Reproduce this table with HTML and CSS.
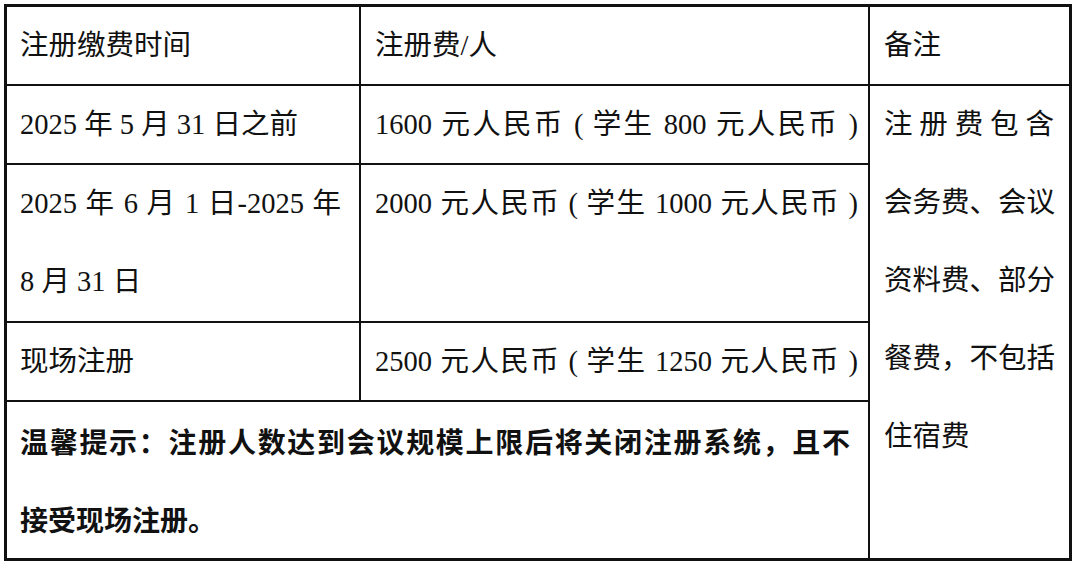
FILE: index.html
```html
<!DOCTYPE html>
<html lang="zh-CN">
<head>
<meta charset="utf-8">
<title>注册缴费</title>
<link rel="stylesheet" href="styles.css">
</head>
<body>
<div class="page">
  <div class="fee-table">
    <div class="cell c1">注册缴费时间</div>
    <div class="cell c2">注册费/人</div>
    <div class="cell c3">备注</div>

    <div class="cell c1">2025 年 5 月 31 日之前</div>
    <div class="cell c2 just">1600 元人民币 ( 学生 800 元人民币 )</div>
    <div class="cell c3 remark">
      <div class="jl">注册费包含</div>
      <div class="jl">会务费、会议</div>
      <div class="jl">资料费、部分</div>
      <div class="jl">餐费，不包括</div>
      <div>住宿费</div>
    </div>

    <div class="cell c1 tall">
      <div class="jl">2025 年 6 月 1 日-2025 年</div>
      <div>8 月 31 日</div>
    </div>
    <div class="cell c2 just tall">2000 元人民币 ( 学生 1000 元人民币 )</div>

    <div class="cell c1">现场注册</div>
    <div class="cell c2 just">2500 元人民币 ( 学生 1250 元人民币 )</div>

    <div class="cell note">
      <div class="jl">温馨提示：注册人数达到会议规模上限后将关闭注册系统，且不</div>
      <div>接受现场注册。</div>
    </div>
  </div>
</div>
</body>
</html>
```

FILE: styles.css
```css
html, body {
  margin: 0;
  padding: 0;
  background: #ffffff;
}

.page {
  padding: 4px;
  width: 1068px;
}

.fee-table {
  display: grid;
  grid-template-columns: 352px 507px 199px;
  grid-template-rows: 77px 77px 156px 77px 156px;
  gap: 2px;
  padding: 3px;
  background: #111111;
  font-family: "Liberation Serif", "Noto Sans CJK SC", serif;
  font-size: 28.5px;
  font-weight: 400;
  color: #111111;
}

.cell {
  background: #ffffff;
  line-height: 78px;
  white-space: nowrap;
}

.c1 {
  padding: 0 18px 0 13px;
}

.c2 {
  padding: 0 10px 0 14px;
}

.c3 {
  padding: 0 15px 0 14px;
}

.remark {
  grid-row: 2 / span 4;
  grid-column: 3;
}

.just {
  text-align: justify;
  text-align-last: justify;
}

.jl {
  text-align: justify;
  text-align-last: justify;
}

.note {
  grid-column: 1 / span 2;
  padding: 0 18px 0 13px;
  font-size: 28px;
  font-weight: 700;
  font-family: "Noto Sans CJK SC", sans-serif;
}
```
